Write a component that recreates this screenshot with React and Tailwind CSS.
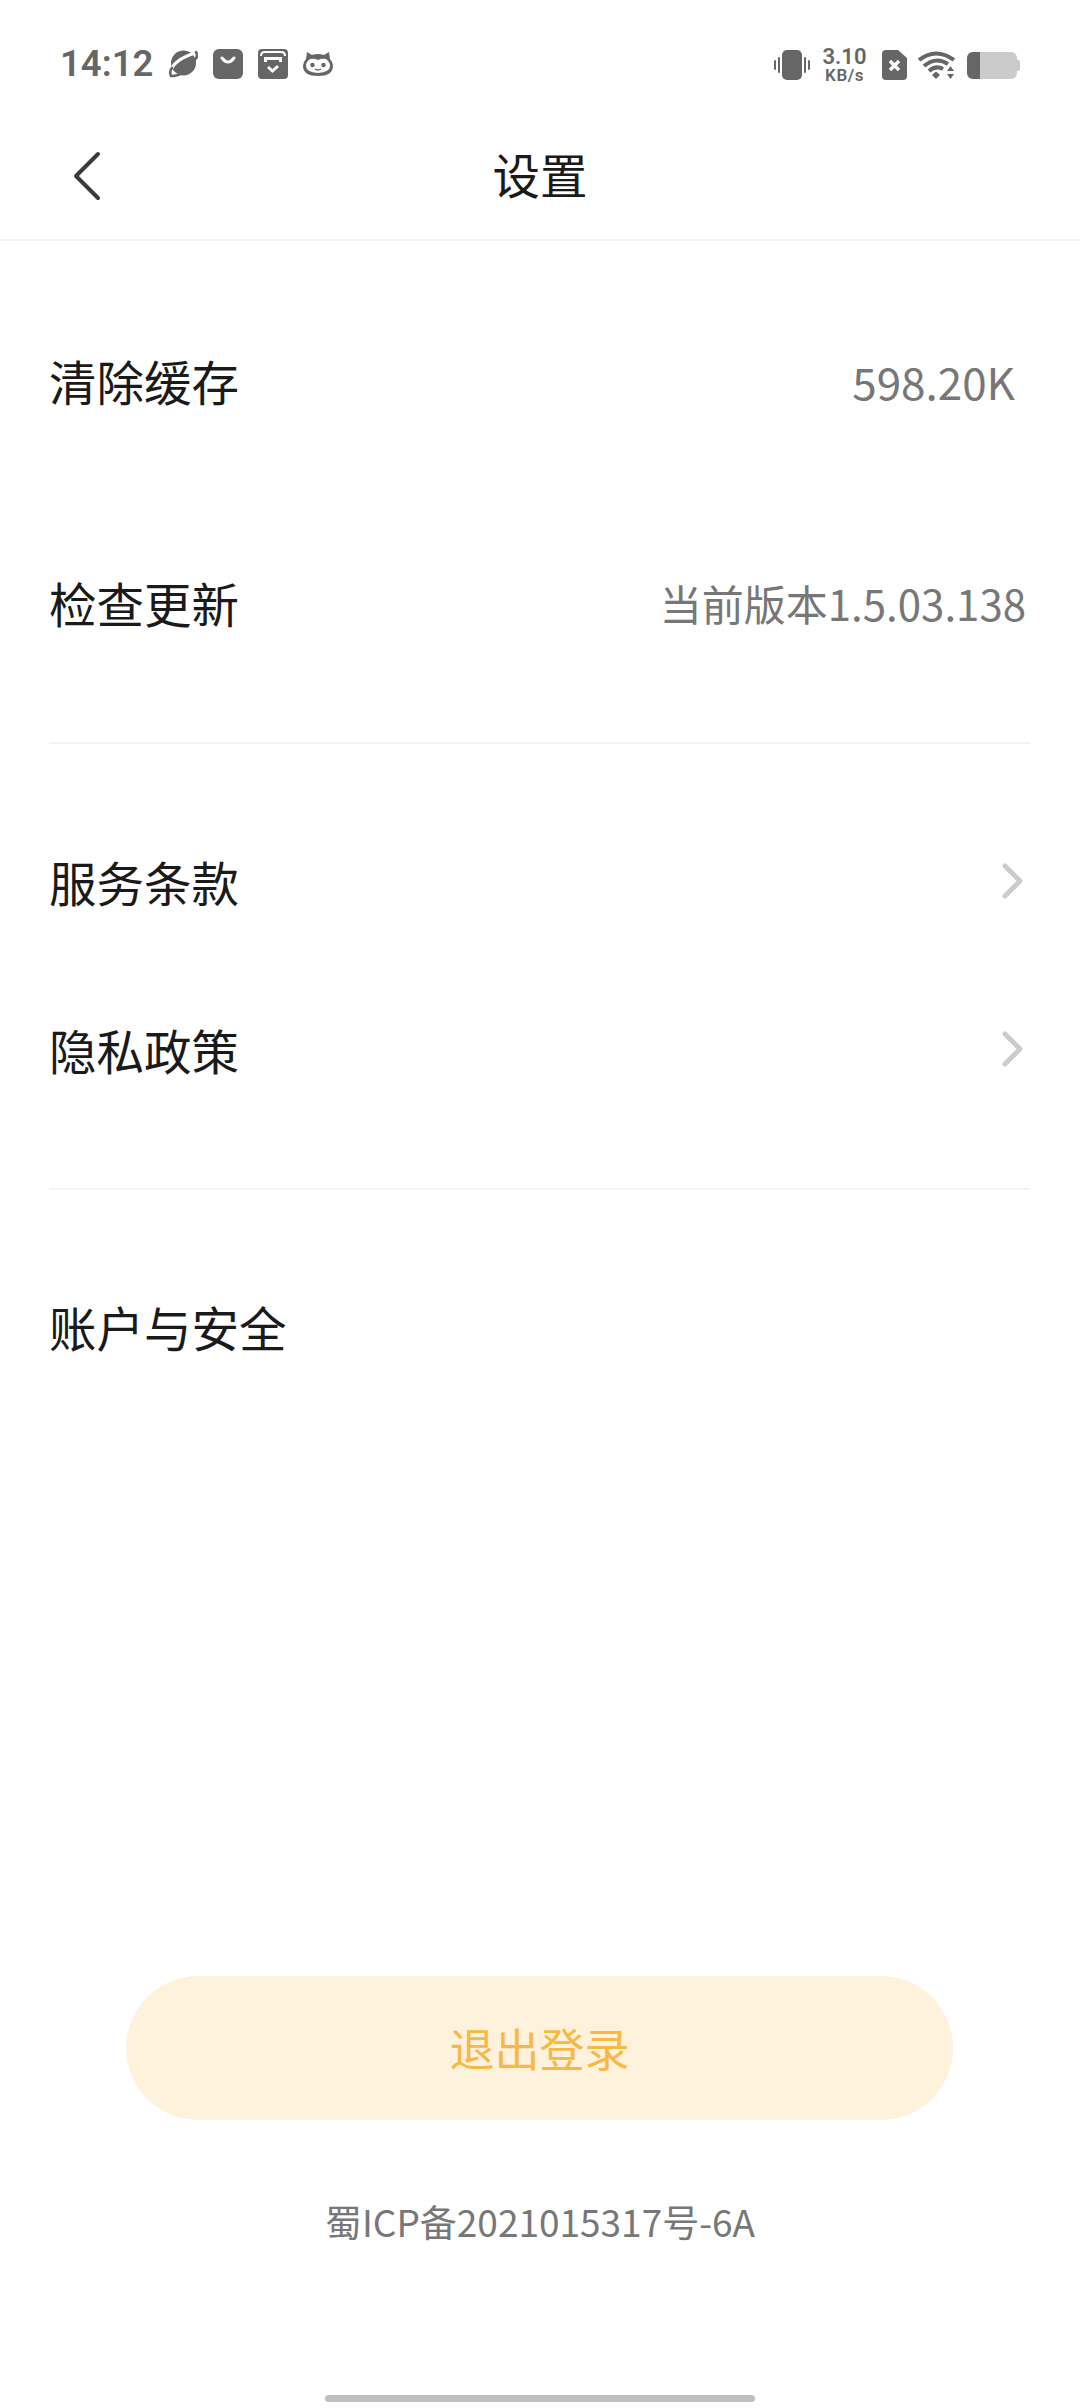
import React from "react";

const font = { fontFamily: '"Noto Sans CJK SC", "Noto Sans", sans-serif' };

function Chevron() {
  return (
    <svg width="24" height="36" viewBox="0 0 24 36" fill="none" className="shrink-0 -mt-[2px]">
      <path d="M4 3 L19 18 L4 33" stroke="#cccccc" strokeWidth="5" strokeLinecap="round" strokeLinejoin="round" />
    </svg>
  );
}

function StatusLeft() {
  return (
    <div className="flex items-center">
      <span className="text-[36.5px] leading-none font-semibold text-[#666666] [font-family:Roboto,sans-serif] w-[93px]">14:12</span>
      <svg width="30" height="30" viewBox="0 0 30 30" className="ml-[15px]" fill="none">
        <circle cx="15.5" cy="14" r="12.5" fill="#666" />
        <path d="M2.5 23 Q5 11 27 4" stroke="#fff" strokeWidth="3" fill="none" />
        <path d="M3 27 Q1 22 4 19 M28 3 Q31 8 26 11" stroke="#666" strokeWidth="2.6" fill="none" strokeLinecap="round" />
        <path d="M3 27 Q15 28 27 11" stroke="#666" strokeWidth="2.4" fill="none" />
      </svg>
      <svg width="30" height="30" viewBox="0 0 30 30" className="ml-[15px]">
        <rect x="0" y="0" width="30" height="30" rx="6" fill="#666" />
        <path d="M9 9 Q15 17 21 9" stroke="#fff" strokeWidth="3" fill="none" strokeLinecap="round" />
      </svg>
      <svg width="30" height="30" viewBox="0 0 30 30" className="ml-[15px]">
        <rect x="0" y="0" width="30" height="30" rx="4" fill="#666" />
        <path d="M3 7 Q3 3 7 3 H23 Q27 3 27 7" stroke="#fff" strokeWidth="2" fill="none" />
        <path d="M6 8 H24 V13 H21 V11 H9 V13 H6Z" fill="#fff" />
        <path d="M10 18 L14.5 22 L20 17" stroke="#fff" strokeWidth="3" fill="none" />
      </svg>
      <svg width="30" height="24" viewBox="0 0 30 24" className="ml-[15px]">
        <path d="M4 0 L9 3 Q15 1 21 3 L26 0 L27 7 Q30 10 30 14 Q30 24 15 24 Q0 24 0 14 Q0 10 3 7Z" fill="#666" />
        <path d="M15 8 Q19 6 23 7 Q27 10 27 14 Q27 20 15 21 Q3 20 3 14 Q3 10 7 7 Q11 6 15 8Z" fill="#fff" />
        <circle cx="9.5" cy="13" r="2.2" fill="#666" />
        <circle cx="20.5" cy="13" r="2.2" fill="#666" />
        <path d="M12 17 Q15 19 18 17" stroke="#666" strokeWidth="1.5" fill="none" />
      </svg>
    </div>
  );
}

function StatusRight() {
  return (
    <div className="flex items-center">
      <svg width="36" height="30" viewBox="0 0 36 30">
        <rect x="8" y="0" width="20" height="30" rx="5" fill="#666" />
        <rect x="4" y="7" width="2" height="16" rx="1" fill="#666" />
        <rect x="0" y="10" width="2" height="10" rx="1" fill="#666" />
        <rect x="30" y="7" width="2" height="16" rx="1" fill="#666" />
        <rect x="34" y="10" width="2" height="10" rx="1" fill="#666" />
      </svg>
      <div className="ml-[12px] w-[45px] flex flex-col items-center text-[#666666] font-semibold [font-family:Roboto,sans-serif]">
        <span className="text-[22px] leading-[21px]">3.10</span>
        <span className="text-[17px] leading-[17px] tracking-[0.5px]">KB/s</span>
      </div>
      <svg width="25" height="30" viewBox="0 0 25 30" className="ml-[15px]">
        <path d="M4 0 H16 L25 8 V26 Q25 30 21 30 H4 Q0 30 0 26 V4 Q0 0 4 0Z" fill="#666" />
        <path d="M8 11 L17 20 M17 11 L8 20" stroke="#fff" strokeWidth="3.4" />
      </svg>
      <svg width="37" height="29" viewBox="0 0 37 29" className="ml-[11px]" fill="none">
        <path d="M1 9 Q18 -4 36 9" stroke="#666" strokeWidth="4" />
        <path d="M6 15 Q18 5 30 13" stroke="#666" strokeWidth="4" />
        <path d="M11 20 Q18 14 25 18" stroke="#666" strokeWidth="4" />
        <path d="M14 24 L18 20.5 L22 24 L18 28Z" fill="#666" />
        <path d="M29 20 L32.5 15 L36 20Z M29 23 L36 23 L32.5 28Z" fill="#666" />
      </svg>
      <div className="ml-[12px] flex items-center">
        <div className="w-[50px] h-[27px] rounded-[6px] bg-[#cbcbcb] overflow-hidden">
          <div className="w-[13px] h-full bg-[#666666]" />
        </div>
        <div className="w-[3px] h-[11px] bg-[#cbcbcb] rounded-r-[2px]" />
      </div>
    </div>
  );
}

function Row({ label, className = "", children }) {
  return (
    <div className={`flex items-center justify-between ${className}`}>
      <span className="text-[47.5px] leading-none text-[#1a1a1a]">{label}</span>
      {children}
    </div>
  );
}

export default function App() {
  return (
    <div style={font} className="w-[1080px] h-[2408px] bg-white flex flex-col relative overflow-hidden">
      <div className="h-[128px] pl-[60px] pr-[60px] pt-[46px] flex items-start justify-between">
        <StatusLeft />
        <StatusRight />
      </div>

      <div className="h-[113px] relative flex items-center justify-center border-b-[2px] border-[#f3f3f3]">
        <svg width="30" height="50" viewBox="0 0 30 50" fill="none" className="absolute left-[72px] top-[23px]">
          <path d="M26 3 L4 25 L26 47" stroke="#3a3a3a" strokeWidth="4" strokeLinecap="round" strokeLinejoin="round" />
        </svg>
        <span className="text-[47.5px] leading-none text-[#1a1a1a] -mt-[19px]">设置</span>
      </div>

      <div className="pl-[49px] pr-[54px]">
        <Row label="清除缓存" className="h-[72px] mt-[104px] pr-[11px]">
          <span className="text-[44px] leading-none text-[#777777]">598.20K</span>
        </Row>
        <Row label="检查更新" className="h-[72px] mt-[150px]">
          <span className="text-[42px] leading-none text-[#777777]">当前版本1.5.03.138</span>
        </Row>
      </div>

      <div className="ml-[49px] mr-[50px] mt-[103px] h-[2px] bg-[#f3f3f3]" />

      <div className="pl-[49px] pr-[55px]">
        <Row label="服务条款" className="h-[72px] mt-[102px]"><Chevron /></Row>
        <Row label="隐私政策" className="h-[72px] mt-[96px]"><Chevron /></Row>
      </div>

      <div className="ml-[49px] mr-[50px] mt-[102px] h-[2px] bg-[#f3f3f3]" />

      <div className="pl-[49px]">
        <Row label="账户与安全" className="h-[72px] mt-[101px]" />
      </div>

      <div className="flex-1" />

      <div className="ml-[126px] mr-[127px] h-[144px] rounded-full bg-[#fff2dd] flex items-center justify-center">
        <span className="text-[45px] leading-none text-[#f5b944] -mt-[2px]">退出登录</span>
      </div>

      <div className="mt-[79px] text-center text-[37px] leading-[44px] text-[#777777]">蜀ICP备2021015317号-6A</div>

      <div className="mt-[152px] mb-[6px] mx-auto w-[430px] h-[7px] rounded-full bg-[#bfbfbf]" />
    </div>
  );
}
